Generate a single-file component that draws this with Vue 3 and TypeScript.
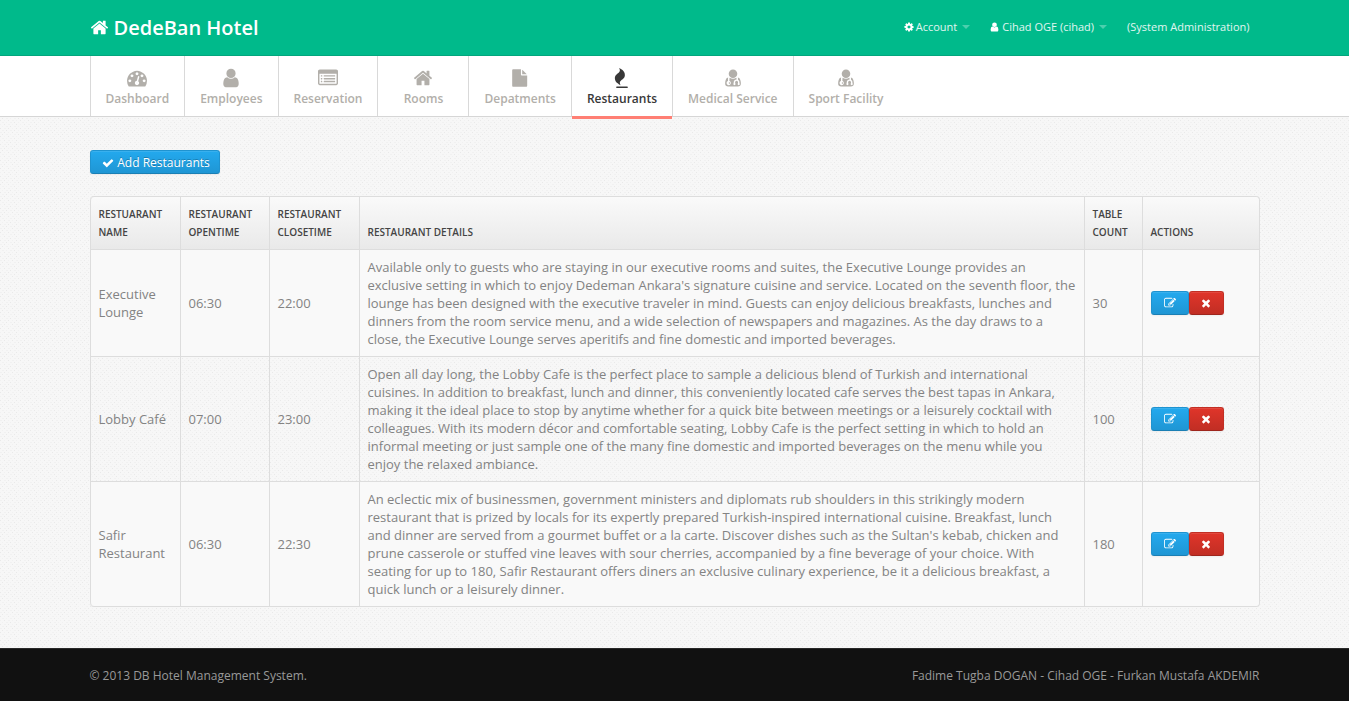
<script setup lang="ts">
interface NavItem {
  label: string
  icon: string
  active?: boolean
}

interface Restaurant {
  name: string
  open: string
  close: string
  details: string
  tables: number
}

const row = 'v64q0 13-9.5 22.5t-22.5 9.5h-64q-13 0-22.5-9.5t-9.5-22.5v-64q0-13 9.5-22.5t22.5-9.5h64q13 0 22.5 9.5t9.5 22.5z'
const line = 'v64q0 13-9.5 22.5t-22.5 9.5h-960q-13 0-22.5-9.5t-9.5-22.5v-64q0-13 9.5-22.5t22.5-9.5h960q13 0 22.5 9.5t9.5 22.5z'

const icons: Record<string, string> = {
  home: 'M1472 992v480q0 26-19 45t-45 19h-384v-384h-256v384h-384q-26 0-45-19t-19-45v-480q0-1 .5-3t.5-3l575-474 575 474q1 2 1 6zm223-69l-62 74q-8 9-21 11h-3q-13 0-21-7l-692-577-692 577q-12 8-24 7-13-2-21-11l-62-74q-8-10-7-23.5t11-21.5l719-599q32-26 76-26t76 26l244 204v-195q0-14 9-23t23-9h192q14 0 23 9t9 23v408l219 182q10 8 11 21.5t-7 23.5z',
  gauge: 'M384 1152q0-53-37.5-90.5t-90.5-37.5-90.5 37.5-37.5 90.5 37.5 90.5 90.5 37.5 90.5-37.5 37.5-90.5zm192-448q0-53-37.5-90.5t-90.5-37.5-90.5 37.5-37.5 90.5 37.5 90.5 90.5 37.5 90.5-37.5 37.5-90.5zm428 481l101-382q6-26-7.5-48.5t-38.5-29.5-48 6.5-30 39.5l-101 382q-60 5-107 43.5t-63 98.5q-20 77 20 146t117 89 146-20 89-117q16-60-6-117t-72-91zm660-33q0-53-37.5-90.5t-90.5-37.5-90.5 37.5-37.5 90.5 37.5 90.5 90.5 37.5 90.5-37.5 37.5-90.5zm-640-640q0-53-37.5-90.5t-90.5-37.5-90.5 37.5-37.5 90.5 37.5 90.5 90.5 37.5 90.5-37.5 37.5-90.5zm448 192q0-53-37.5-90.5t-90.5-37.5-90.5 37.5-37.5 90.5 37.5 90.5 90.5 37.5 90.5-37.5 37.5-90.5zm320 448q0 261-141 483-19 29-54 29h-1402q-35 0-54-29-141-221-141-483 0-182 71-348t191-286 286-191 348-71 348 71 286 191 191 286 71 348z',
  user: 'M1536 1399q0 109-62.5 187t-150.5 78h-854q-88 0-150.5-78t-62.5-187q0-85 8.5-160.5t31.5-152 58.5-131 94-89 134.5-34.5q131 128 313 128t313-128q76 0 134.5 34.5t94 89 58.5 131 31.5 152 8.5 160.5zm-256-887q0 159-112.5 271.5t-271.5 112.5-271.5-112.5-112.5-271.5 112.5-271.5 271.5-112.5 271.5 112.5 112.5 271.5z',
  list: `M384 1184${row}M384 928${row}M384 672${row}M1536 1184${line}M1536 928${line}M1536 672${line}M1664 1376v-832q0-13-9.5-22.5t-22.5-9.5h-1472q-13 0-22.5 9.5t-9.5 22.5v832q0 13 9.5 22.5t22.5 9.5h1472q13 0 22.5-9.5t9.5-22.5zm128-1088v1088q0 66-47 113t-113 47h-1472q-66 0-113-47t-47-113v-1088q0-66 47-113t113-47h1472q66 0 113 47t47 113z`,
  file: 'M1152 512v-472q22 14 36 28l408 408q14 14 28 36h-472zm-128 32q0 40 28 68t68 28h544v1056q0 40-28 68t-68 28h-1344q-40 0-68-28t-28-68v-1600q0-40 28-68t68-28h800v544z',
  fire: 'M1408 1696v64q0 13-9.5 22.5t-22.5 9.5h-960q-13 0-22.5-9.5t-9.5-22.5v-64q0-13 9.5-22.5t22.5-9.5h960q13 0 22.5 9.5t9.5 22.5zm-256-1056q0 78-24.5 144t-64 112.5-87.5 88-96 77.5-87.5 72-64 81.5-24.5 96.5q0 96 67 224l-4-1 1 1q-90-41-160-83t-138.5-100-113.5-122.5-72.5-150.5-27.5-184q0-78 24.5-144t64-112.5 87.5-88 96-77.5 87.5-72 64-81.5 24.5-96.5q0-94-66-224l3 1-1-1q90 41 160 83t138.5 100 113.5 122.5 72.5 150.5 27.5 184z',
  medic: 'M1280 512q0 159-112.5 271.5t-271.5 112.5-271.5-112.5-112.5-271.5 112.5-271.5 271.5-112.5 271.5 112.5 112.5 271.5zM640 1344q0 26-19 45t-45 19-45-19-19-45 19-45 45-19 45 19 19 45zM1600 1405q0 121-73 190t-194 69h-874q-121 0-194-69t-73-190q0-68 5.500-131t24-138 47.500-132.500 81-103 120-60.500q-22 52-22 120v203q-58 20-93 70t-35 111q0 80 56 136t136 56 136-56 56-136q0-61-35.500-111t-92.500-70v-203q0-62 25-93 132 104 295 104t295-104q25 31 25 93v64q-106 0-181 75t-75 181v89q-32 29-32 71 0 40 28 68t68 28 68-28 28-68q0-42-32-71v-89q0-52 38-90t90-38 90 38 38 90v89q-32 29-32 71 0 40 28 68t68 28 68-28 28-68q0-42-32-71v-89q0-68-34.500-127.500t-93.500-93.500q0-10 .5-42.500t0-48-2.500-41.500-7-47-13-40q68 15 120 60.500t81 103 47.500 132.500 24 138 5.500 131z',
  check: 'M1671 566q0 40-28 68l-724 724-136 136q-28 28-68 28t-68-28l-136-136-362-362q-28-28-28-68t28-68l136-136q28-28 68-28t68 28l294 295 656-657q28-28 68-28t68 28l136 136q28 28 28 68z',
  times: 'M1490 1322q0 40-28 68l-136 136q-28 28-68 28t-68-28l-294-294-294 294q-28 28-68 28t-68-28l-136-136q-28-28-28-68t28-68l294-294-294-294q-28-28-28-68t28-68l136-136q28-28 68-28t68 28l294 294 294-294q28-28 68-28t68 28l136 136q28 28 28 68t-28 68l-294 294 294 294q28 28 28 68z',
  cog: 'M1152 896q0-106-75-181t-181-75-181 75-75 181 75 181 181 75 181-75 75-181zm512-109v222q0 12-8 23t-20 13l-185 28q-19 54-39 91 35 50 107 138 10 12 10 25t-9 23q-27 37-99 108t-94 71q-12 0-26-9l-138-108q-44 23-91 38-16 136-29 186-7 28-36 28h-222q-14 0-24.500-8.500t-11.500-21.500l-28-184q-49-16-90-37l-141 107q-10 9-25 9-14 0-25-11-126-114-165-168-7-10-7-23 0-12 8-23 15-21 51-66.500t54-70.500q-27-50-41-99l-183-27q-13-2-21-12.500t-8-23.500v-222q0-12 8-23t19-13l186-28q14-46 39-92-40-57-107-138-10-12-10-24 0-10 9-23 26-36 98.500-107.500t94.500-71.500q13 0 26 10l138 107q44-23 91-38 16-136 29-186 7-28 36-28h222q14 0 24.500 8.500t11.500 21.500l28 184q49 16 90 37l142-107q9-9 24-9 13 0 25 10 129 119 165 170 7 8 7 22 0 12-8 23-15 21-51 66.500t-54 70.500q26 50 41 98l183 28q13 2 21 12.500t8 23.500z',
  edit: 'M888 1184l116-116-152-152-116 116v56h96v96h56zm440-720q-16-16-33 1l-350 350q-17 17-1 33t33-1l350-350q17-17 1-33zm80 594v190q0 119-84.500 203.500t-203.500 84.500h-832q-119 0-203.500-84.500t-84.500-203.500v-832q0-119 84.500-203.500t203.500-84.500h832q63 0 117 25 15 7 18 23 3 17-9 29l-49 49q-14 14-32 8-23-6-45-6h-832q-66 0-113 47t-47 113v832q0 66 47 113t113 47h832q66 0 113-47t47-113v-126q0-13 9-22l64-64q15-15 35-7t20 29zm-96-738l288 288-672 672h-288v-288zm444 132l-92 92-288-288 92-92q28-28 68-28t68 28l152 152q28 28 28 68t-28 68z',
}

const navItems: NavItem[] = [
  { label: 'Dashboard', icon: 'gauge' },
  { label: 'Employees', icon: 'user' },
  { label: 'Reservation', icon: 'list' },
  { label: 'Rooms', icon: 'home' },
  { label: 'Depatments', icon: 'file' },
  { label: 'Restaurants', icon: 'fire', active: true },
  { label: 'Medical Service', icon: 'medic' },
  { label: 'Sport Facility', icon: 'medic' },
]

/* Most glyphs use the full 1792 unit square; these need their own framing. */
const frames: Record<string, string> = {
  user: '64 64 1664 1664',
  file: '-96 -128 2048 2048',
}

const restaurants: Restaurant[] = [
  {
    name: 'Executive Lounge',
    open: '06:30',
    close: '22:00',
    details:
      "Available only to guests who are staying in our executive rooms and suites, the Executive Lounge provides an exclusive setting in which to enjoy Dedeman Ankara's signature cuisine and service. Located on the seventh floor, the lounge has been designed with the executive traveler in mind. Guests can enjoy delicious breakfasts, lunches and dinners from the room service menu, and a wide selection of newspapers and magazines. As the day draws to a close, the Executive Lounge serves aperitifs and fine domestic and imported beverages.",
    tables: 30,
  },
  {
    name: 'Lobby Café',
    open: '07:00',
    close: '23:00',
    details:
      'Open all day long, the Lobby Cafe is the perfect place to sample a delicious blend of Turkish and international cuisines. In addition to breakfast, lunch and dinner, this conveniently located cafe serves the best tapas in Ankara, making it the ideal place to stop by anytime whether for a quick bite between meetings or a leisurely cocktail with colleagues. With its modern décor and comfortable seating, Lobby Cafe is the perfect setting in which to hold an informal meeting or just sample one of the many fine domestic and imported beverages on the menu while you enjoy the relaxed ambiance.',
    tables: 100,
  },
  {
    name: 'Safir Restaurant',
    open: '06:30',
    close: '22:30',
    details:
      "An eclectic mix of businessmen, government ministers and diplomats rub shoulders in this strikingly modern restaurant that is prized by locals for its expertly prepared Turkish-inspired international cuisine. Breakfast, lunch and dinner are served from a gourmet buffet or a la carte. Discover dishes such as the Sultan's kebab, chicken and prune casserole or stuffed vine leaves with sour cherries, accompanied by a fine beverage of your choice. With seating for up to 180, Safir Restaurant offers diners an exclusive culinary experience, be it a delicious breakfast, a quick lunch or a leisurely dinner.",
    tables: 180,
  },
]
</script>

<template>
  <div class="page">
    <header class="topbar">
      <div class="container topbar-inner">
        <a class="brand" href="#">
          <svg class="brand-icon" viewBox="0 0 1792 1792" aria-hidden="true"><path :d="icons.home" /></svg>
          <span>DedeBan Hotel</span>
        </a>
        <nav class="user-nav" aria-label="Account">
          <a href="#">
            <svg class="small-icon" viewBox="64 64 1664 1664" aria-hidden="true"><path :d="icons.cog" /></svg>
            <span>Account</span><i class="caret"></i>
          </a>
          <a href="#">
            <svg class="small-icon user-icon" viewBox="256 64 1280 1664" aria-hidden="true"><path :d="icons.user" /></svg>
            <span>Cihad OGE (cihad)</span><i class="caret"></i>
          </a>
          <a href="#"><span>(System Administration)</span></a>
        </nav>
      </div>
    </header>

    <nav class="subnav" aria-label="Main">
      <ul class="container subnav-list">
        <li v-for="item in navItems" :key="item.label" :class="{ active: item.active }">
          <a href="#" :aria-current="item.active ? 'page' : undefined">
            <svg class="nav-icon" :viewBox="frames[item.icon] ?? '0 0 1792 1792'" aria-hidden="true"><path fill-rule="evenodd" :d="icons[item.icon]" /></svg>
            <span>{{ item.label }}</span>
          </a>
        </li>
      </ul>
    </nav>

    <main class="main">
      <div class="container">
        <button class="btn btn-blue btn-add" type="button">
          <svg class="btn-icon" viewBox="0 0 1792 1792" aria-hidden="true"><path :d="icons.check" /></svg>
          <span>Add Restaurants</span>
        </button>

        <table class="grid">
          <colgroup>
            <col class="col-name" />
            <col class="col-open" />
            <col class="col-close" />
            <col />
            <col class="col-count" />
            <col class="col-actions" />
          </colgroup>
          <thead>
            <tr>
              <th scope="col">Restuarant Name</th>
              <th scope="col">Restaurant OpenTime</th>
              <th scope="col">Restaurant CloseTime</th>
              <th scope="col">Restaurant Details</th>
              <th scope="col">Table Count</th>
              <th scope="col">Actions</th>
            </tr>
          </thead>
          <tbody>
            <tr v-for="r in restaurants" :key="r.name">
              <td>{{ r.name }}</td>
              <td>{{ r.open }}</td>
              <td>{{ r.close }}</td>
              <td>{{ r.details }}</td>
              <td>{{ r.tables }}</td>
              <td>
                <div class="actions">
                  <button class="btn btn-blue btn-edit" type="button" :aria-label="`Edit ${r.name}`">
                    <svg class="btn-icon" viewBox="0 0 1792 1792" aria-hidden="true"><path :d="icons.edit" /></svg>
                  </button>
                  <button class="btn btn-red btn-delete" type="button" :aria-label="`Delete ${r.name}`">
                    <svg class="btn-icon" viewBox="0 0 1792 1792" aria-hidden="true"><path :d="icons.times" /></svg>
                  </button>
                </div>
              </td>
            </tr>
          </tbody>
        </table>
      </div>
    </main>

    <footer class="footer">
      <div class="container footer-inner">
        <span>© 2013 DB Hotel Management System.</span>
        <span>Fadime Tugba DOGAN - Cihad OGE - Furkan Mustafa AKDEMIR</span>
      </div>
    </footer>
  </div>
</template>

<style>
body {
  margin: 0;
}
</style>

<style scoped>
.page {
  display: flex;
  flex-direction: column;
  min-height: 100vh;
  font: 13px/18px "Open Sans", "Noto Sans", sans-serif;
  color: #838383;
  background-color: #f7f7f7;
  background-image: url("data:image/svg+xml,%3Csvg xmlns='http://www.w3.org/2000/svg' width='20' height='16' shape-rendering='crispEdges'%3E%3Cpath fill='%23e9e9e9' d='M0 0h1v1h-1zM8 0h1v1h-1zM16 0h1v1h-1zM6 2h1v1h-1zM14 2h1v1h-1zM4 4h1v1h-1zM12 4h1v1h-1zM2 6h1v1h-1zM18 6h1v1h-1zM8 8h1v1h-1zM0 8h1v1h-1zM14 10h1v1h-1zM4 12h1v1h-1zM16 12h1v1h-1zM10 14h1v1h-1z'/%3E%3Cpath fill='%23f1f1f1' d='M4 0h2v1h-2zM12 0h1v1h-1zM2 2h2v1h-2zM10 2h2v1h-2zM18 2h1v1h-1zM0 4h2v1h-2zM8 4h1v1h-1zM16 4h2v1h-2zM6 6h2v1h-2zM10 6h1v1h-1zM14 6h2v1h-2zM4 8h1v1h-1zM12 8h2v1h-2zM16 8h1v1h-1zM2 10h2v1h-2zM6 10h1v1h-1zM10 10h2v1h-2zM18 10h1v1h-1zM0 12h1v1h-1zM8 12h2v1h-2zM12 12h1v1h-1zM2 14h1v1h-1zM6 14h2v1h-2zM14 14h2v1h-2zM18 14h1v1h-1z'/%3E%3C/svg%3E");
}

.container {
  box-sizing: border-box;
  width: 100%;
  max-width: 1170px;
  margin: 0 auto;
}

svg {
  display: block;
  fill: currentColor;
  flex: none;
}

a {
  color: inherit;
  text-decoration: none;
}

.topbar {
  background: #00ba8b;
  border-bottom: 1px solid #02a67d;
}

.topbar-inner {
  display: flex;
  align-items: center;
  justify-content: space-between;
  height: 55px;
}

.brand {
  display: flex;
  align-items: center;
  gap: 5px;
  font-size: 20px;
  font-weight: 600;
  line-height: 20px;
  color: #fff;
}

.brand-icon {
  width: 19px;
  height: 19px;
}

.user-nav {
  display: flex;
  gap: 20px;
  padding: 0 10px 2px 0;
  font-size: 11px;
  color: #e0f6f1;
}

.user-nav a {
  display: flex;
  align-items: center;
}

.small-icon {
  width: 10px;
  height: 10px;
  margin-right: 2px;
  color: #fff;
}

.user-icon {
  width: 9px;
  margin-right: 3px;
}

.caret {
  margin-left: 5px;
  border-top: 4px solid #4dcfae;
  border-right: 4px solid transparent;
  border-left: 4px solid transparent;
}

.subnav {
  background: #fff;
  border-bottom: 1px solid #d6d6d6;
}

.subnav-list {
  display: flex;
  height: 60px;
  padding: 0;
  list-style: none;
}

.subnav-list li {
  box-sizing: border-box;
  min-width: 91px;
  border-left: 1px solid #d9d9d9;
  font-size: 12px;
  font-weight: 600;
  color: #b2afaa;
}

.subnav-list a {
  display: flex;
  flex-direction: column;
  align-items: center;
  gap: 2px;
  height: 60px;
  box-sizing: border-box;
  padding: 12px 15px 0;
  white-space: nowrap;
}

.subnav-list .active {
  color: #383838;
}

.subnav-list .active a {
  height: 63px;
  border-bottom: 3px solid #ff7f74;
}

.nav-icon {
  width: 20px;
  height: 20px;
}

.main {
  flex: 1;
  padding: 33px 0 41px;
}

.btn {
  display: inline-flex;
  align-items: center;
  justify-content: center;
  box-sizing: border-box;
  height: 24px;
  padding: 0;
  border: 1px solid;
  border-radius: 3px;
  font: inherit;
  font-size: 12px;
  color: #fff;
  text-shadow: 0 -1px 0 rgba(0, 0, 0, 0.25);
  box-shadow: inset 0 1px 0 rgba(255, 255, 255, 0.1), 0 1px 2px rgba(0, 0, 0, 0.05);
}

.btn-blue {
  border-color: #1f93d0 #1f93d0 #1b7fb4;
  background: linear-gradient(#23a9ee, #1f96d4);
}

.btn-red {
  border-color: #c22f24 #c22f24 #9e261d;
  background: linear-gradient(#e0352a, #c12e24);
}

.btn-add {
  display: flex;
  gap: 3px;
  width: 130px;
  padding: 1px 0 0 3px;
}

.btn-icon {
  width: 12px;
  height: 12px;
}

.actions {
  display: flex;
}

.btn-edit {
  width: 38px;
}

.btn-delete {
  width: 35px;
}

.grid {
  width: 100%;
  margin-top: 22px;
  table-layout: fixed;
  border: 1px solid #ddd;
  border-left: 0;
  border-radius: 4px;
  border-spacing: 0;
  border-collapse: separate;
}

.col-name,
.col-close {
  width: 90px;
}

.col-open {
  width: 89px;
}

.col-count {
  width: 58px;
}

.col-actions {
  width: 117px;
}

.grid th,
.grid td {
  padding: 8px;
  border-left: 1px solid #ddd;
  text-align: left;
}

.grid th {
  vertical-align: bottom;
  font-size: 10px;
  font-weight: 600;
  text-transform: uppercase;
  color: #444;
  background: linear-gradient(#fafafa, #e9e9e9);
}

.grid td {
  border-top: 1px solid #ddd;
  vertical-align: middle;
}

.grid tbody tr:nth-child(odd) td {
  background: #f9f9f9;
}

.grid th:first-child {
  border-top-left-radius: 4px;
}

.grid th:last-child {
  border-top-right-radius: 4px;
}

.grid tbody tr:last-child td:first-child {
  border-bottom-left-radius: 4px;
}

.grid tbody tr:last-child td:last-child {
  border-bottom-right-radius: 4px;
}

.footer {
  background: #111;
  border-top: 1px solid #292929;
  font-size: 12px;
  color: #999;
}

.footer-inner {
  display: flex;
  justify-content: space-between;
  padding: 18px 0 16px;
}
</style>
